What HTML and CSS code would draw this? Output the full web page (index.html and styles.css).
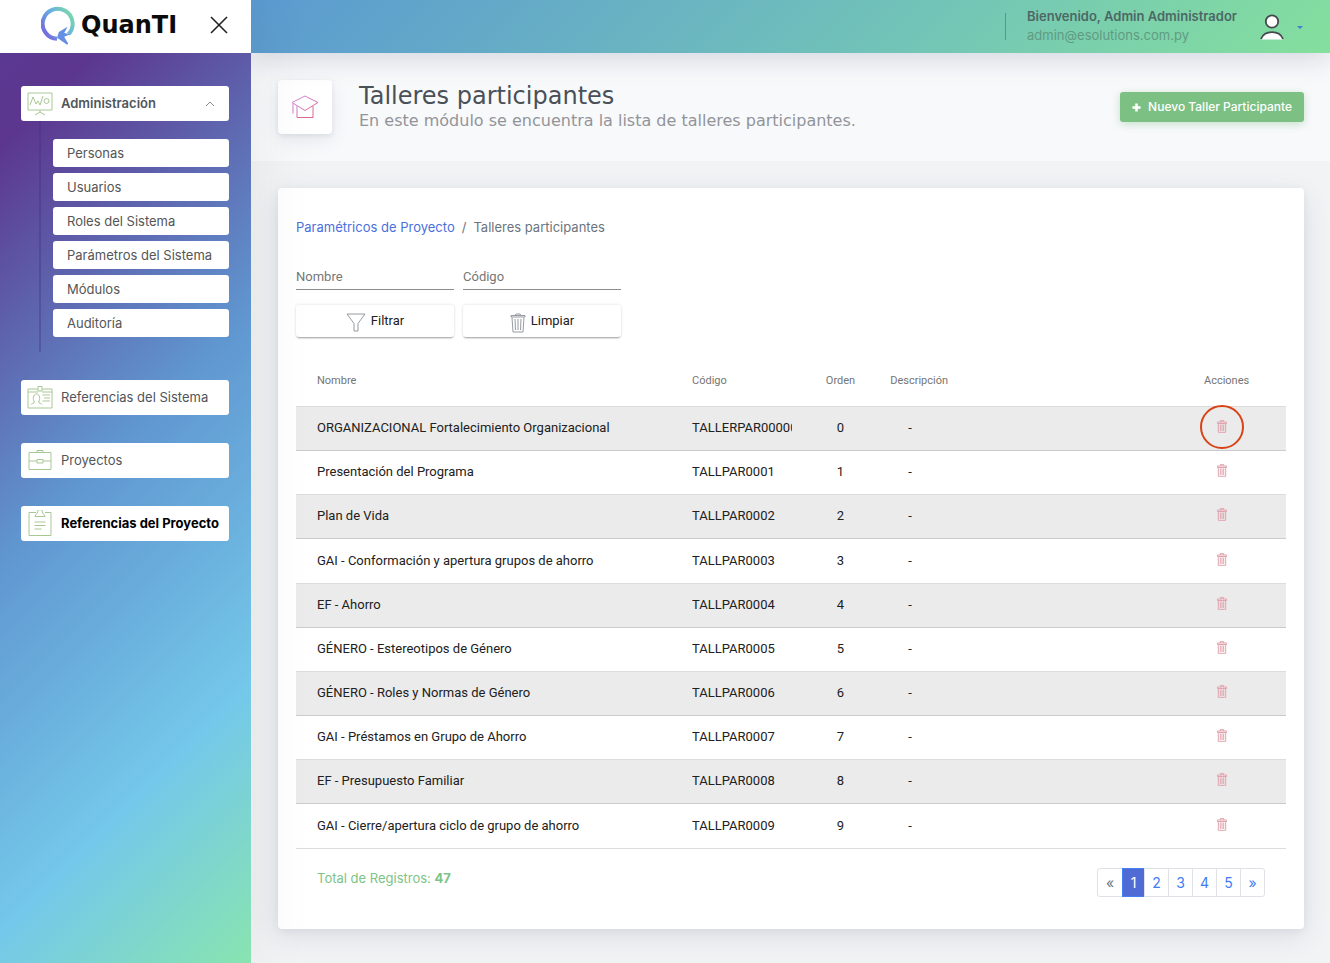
FILE: index.html
```html
<!DOCTYPE html>
<html lang="es">
<head>
<meta charset="utf-8">
<meta name="viewport" content="width=device-width, initial-scale=1">
<title>QuanTI - Talleres participantes</title>
<link rel="stylesheet" href="styles.css">
</head>
<body>
<svg class="defs" aria-hidden="true">
  <defs>
    <linearGradient id="logo-grad" x1="0" y1="0.8" x2="1" y2="0.1">
      <stop offset="0" stop-color="#7667dc"/><stop offset="0.5" stop-color="#66aee3"/><stop offset="1" stop-color="#7ddca6"/>
    </linearGradient>
    <linearGradient id="cap-grad" x1="0" y1="0" x2="1" y2="1">
      <stop offset="0" stop-color="#cf8bea"/><stop offset="1" stop-color="#dc5f78"/>
    </linearGradient>
    <symbol id="trash" viewBox="0 0 10 13">
      <path d="M0.5 3.5V2h9v1.5zM3.3 2V0.6h3.4V2M1.3 3.5V12.3h7.4V3.5M3.3 4.5v6.5M5 4.5v6.5M6.700 4.500v6.500"/>
    </symbol>
  </defs>
</svg>
<div class="app">
  <aside class="sidebar">
    <div class="brand">
      <svg class="brand-mark" viewBox="0 0 36 42" aria-hidden="true">
        <path d="M16 34.800A15 15 0 1 1 27.500 30.200" fill="none" stroke="url(#logo-grad)" stroke-width="4"/>
        <path d="M24.500 25l-6 3.500-1.500 5 9.500 6.500-4.500-7.500 4.500-2-4.500-1z" fill="#648fe2" stroke="#648fe2" stroke-width="1.600"/>
      </svg>
      <span class="brand-name">QuanTI</span>
      <button class="close" type="button" aria-label="Cerrar menú">
        <svg viewBox="0 0 18 18"><path d="M1 1l16 16M17 1L1 17"/></svg>
      </button>
    </div>
    <nav class="menu">
      <div class="group">
        <button class="item item-open" type="button">
          <svg class="item-icon" viewBox="0 0 26 26"><path d="M1 3h24v17H1zM13 20v2M8 25l5-3 5 3M3 15l3-8 3 7 2-3 2 4 3-9"/><circle cx="19.500" cy="11" r="2.500"/></svg>
          <span>Administración</span>
          <svg class="chevron" viewBox="0 0 10 6"><path d="M1 5l4-4 4 4"/></svg>
        </button>
        <div class="submenu">
          <a class="sub" href="#">Personas</a>
          <a class="sub" href="#">Usuarios</a>
          <a class="sub" href="#">Roles del Sistema</a>
          <a class="sub" href="#">Parámetros del Sistema</a>
          <a class="sub" href="#">Módulos</a>
          <a class="sub" href="#">Auditoría</a>
        </div>
      </div>
      <a class="item" href="#">
        <svg class="item-icon" viewBox="0 0 26 26"><path d="M11 5H1v19h24V5H15M1 8h10M15 8h10M11 2.500h4V7h-4zM15.500 11h7.500M17 14h6M15.500 17h7.500M4 20.500c0-1 3.500-1 3.500-2.500-2-2.500-1.500-8 2-8s4 5.500 2 8c0 1.500 3.500 1.500 3.500 2.500"/></svg>
        <span>Referencias del Sistema</span>
      </a>
      <a class="item" href="#">
        <svg class="item-icon" viewBox="0 0 26 26"><path d="M2 5.500h22v17H2zM10 5.500V3.500h6v2M2 14h8M16 14h8M10 12.500h6v3.500h-6z"/></svg>
        <span>Proyectos</span>
      </a>
      <a class="item item-active" href="#">
        <svg class="item-icon" viewBox="0 0 26 26"><path d="M9 2.500H2v23h22v-23h-6M8 6.500h10c0-3-2.500-1.500-2.500-4.500a2 2 0 0 0-5 0c0 3-2.500 1.500-2.500 4.500zM7.500 12h11M7.500 15.500h11M7.500 19h7"/></svg>
        <span>Referencias del Proyecto</span>
      </a>
    </nav>
  </aside>

  <div class="page">
    <header class="topbar">
      <div class="user">
        <strong class="user-name">Bienvenido, Admin Administrador</strong>
        <span class="user-mail">admin@esolutions.com.py</span>
      </div>
      <button class="account" type="button" aria-label="Cuenta">
        <svg class="avatar" viewBox="0 0 24 26"><circle cx="12" cy="7.500" r="6.200"/><path class="avatar-fill" d="M1 25.500C3 20 7 18.200 12 18.200s9 1.800 11 7.300z"/><path d="M1 25C3 20 7 18.200 12 18.200s9 1.800 11 6.800"/></svg>
        <span class="caret"></span>
      </button>
    </header>

    <section class="title-bar">
      <div class="title-icon">
        <svg viewBox="0 0 28 24"><path d="M14 1L27 7.500 14 15.500 1 7.500zM6 11V22.500H22V11M2 8.500v10" fill="none" stroke="url(#cap-grad)"/></svg>
      </div>
      <div class="title-text">
        <h1>Talleres participantes</h1>
        <p>En este módulo se encuentra la lista de talleres participantes.</p>
      </div>
      <button class="new" type="button">
        <svg viewBox="0 0 10 10" aria-hidden="true"><path d="M5 0.500v9M0.500 5h9"/></svg>
        <span>Nuevo Taller Participante</span>
      </button>
    </section>

    <main class="content">
      <div class="card">
        <nav class="crumbs"><a href="#">Paramétricos de Proyecto</a><span>/</span><span>Talleres participantes</span></nav>
        <form class="filters">
          <input type="text" placeholder="Nombre" aria-label="Nombre">
          <input type="text" placeholder="Código" aria-label="Código">
          <button type="button"><svg class="funnel" viewBox="0 0 20 19"><path d="M1 1h18l-7 9.500V18H8v-7.500z"/></svg><span>Filtrar</span></button>
          <button type="button"><svg class="bin" viewBox="0 0 16 20"><path d="M1 4V2.500h14V4zM5 2.500L6 1h4l1 1.500M2 4.500L3 19h10l1-14.500M5 6l.5 11M8 6v11M11 6l-.5 11"/></svg><span>Limpiar</span></button>
        </form>
        <table class="grid">
          <colgroup><col class="c-name"><col class="c-code"><col class="c-order"><col><col class="c-act"></colgroup>
          <thead><tr><th>Nombre</th><th>Código</th><th class="mid">Orden</th><th class="desc">Descripción</th><th class="mid">Acciones</th></tr></thead>
          <tbody>
            <tr><td>ORGANIZACIONAL Fortalecimiento Organizacional</td><td><div class="code">TALLERPAR00000</div></td><td class="mid">0</td><td class="desc">-</td><td class="act"><button class="del marked" type="button" aria-label="Eliminar"><svg><use href="#trash"/></svg></button></td></tr>
            <tr><td>Presentación del Programa</td><td><div class="code">TALLPAR0001</div></td><td class="mid">1</td><td class="desc">-</td><td class="act"><button class="del" type="button" aria-label="Eliminar"><svg><use href="#trash"/></svg></button></td></tr>
            <tr><td>Plan de Vida</td><td><div class="code">TALLPAR0002</div></td><td class="mid">2</td><td class="desc">-</td><td class="act"><button class="del" type="button" aria-label="Eliminar"><svg><use href="#trash"/></svg></button></td></tr>
            <tr><td>GAI - Conformación y apertura grupos de ahorro</td><td><div class="code">TALLPAR0003</div></td><td class="mid">3</td><td class="desc">-</td><td class="act"><button class="del" type="button" aria-label="Eliminar"><svg><use href="#trash"/></svg></button></td></tr>
            <tr><td>EF - Ahorro</td><td><div class="code">TALLPAR0004</div></td><td class="mid">4</td><td class="desc">-</td><td class="act"><button class="del" type="button" aria-label="Eliminar"><svg><use href="#trash"/></svg></button></td></tr>
            <tr><td>GÉNERO - Estereotipos de Género</td><td><div class="code">TALLPAR0005</div></td><td class="mid">5</td><td class="desc">-</td><td class="act"><button class="del" type="button" aria-label="Eliminar"><svg><use href="#trash"/></svg></button></td></tr>
            <tr><td>GÉNERO - Roles y Normas de Género</td><td><div class="code">TALLPAR0006</div></td><td class="mid">6</td><td class="desc">-</td><td class="act"><button class="del" type="button" aria-label="Eliminar"><svg><use href="#trash"/></svg></button></td></tr>
            <tr><td>GAI - Préstamos en Grupo de Ahorro</td><td><div class="code">TALLPAR0007</div></td><td class="mid">7</td><td class="desc">-</td><td class="act"><button class="del" type="button" aria-label="Eliminar"><svg><use href="#trash"/></svg></button></td></tr>
            <tr><td>EF - Presupuesto Familiar</td><td><div class="code">TALLPAR0008</div></td><td class="mid">8</td><td class="desc">-</td><td class="act"><button class="del" type="button" aria-label="Eliminar"><svg><use href="#trash"/></svg></button></td></tr>
            <tr><td>GAI - Cierre/apertura ciclo de grupo de ahorro</td><td><div class="code">TALLPAR0009</div></td><td class="mid">9</td><td class="desc">-</td><td class="act"><button class="del" type="button" aria-label="Eliminar"><svg><use href="#trash"/></svg></button></td></tr>
          </tbody>
        </table>
        <div class="foot">
          <p>Total de Registros: <b>47</b></p>
          <nav class="pager" aria-label="Paginación">
            <a class="off" href="#">«</a><a class="on" href="#">1</a><a href="#">2</a><a href="#">3</a><a href="#">4</a><a href="#">5</a><a href="#">»</a>
          </nav>
        </div>
      </div>
    </main>
  </div>
</div>
</body>
</html>
```
FILE: styles.css
```css
*, *::before, *::after { box-sizing: border-box; }
body { margin: 0; font: 13px/20px Inter, sans-serif; color: #495057; background: #f1f3f5; }
button, input { font: inherit; color: inherit; margin: 0; }
button { border: 0; padding: 0; background: none; cursor: pointer; }
a { text-decoration: none; color: inherit; }
svg { display: block; fill: none; stroke: currentColor; flex: none; }
h1, p { margin: 0; }
.defs { position: absolute; width: 0; height: 0; }

.app { display: flex; min-height: 100vh; }

.sidebar {
  position: relative; z-index: 2; flex: none; width: 251px;
  background: linear-gradient(135deg, #5a3a94 0%, #5c368f 12%, #6096d0 46%, #74c8ea 77%, #88e4b0 100%);
  box-shadow: 7px 0 60px rgba(8, 10, 12, 0.06);
}
.brand { display: flex; align-items: center; height: 53px; padding: 0 23px 3px 41px; background: #fff; }
.brand-mark { width: 36px; height: 42px; }
.brand-name { flex: 1; margin-left: 4px; font: bold 24px/30px "DejaVu Sans", sans-serif; color: #0b0b0b; }
.close { color: #222; }
.close svg { width: 18px; height: 18px; stroke-width: 1.6; }

.menu { display: flex; flex-direction: column; gap: 28px; padding: 33px 22px 40px 21px; }
.item {
  display: flex; align-items: center; width: 100%; height: 35px; padding: 0 14px 2px 6px;
  background: #fff; border-radius: 3px; color: #50555a; white-space: nowrap; text-align: left;
}
.item-icon { width: 26px; height: 26px; margin-right: 8px; color: #a9c795; stroke-width: 1; }
.item-open { font-weight: 600; }
.item-open span { flex: 1; }
.item-active { font-weight: 700; color: #000; padding-right: 0; }
.chevron { width: 10px; height: 6px; margin-top: 3px; color: #888; }
.submenu {
  display: flex; flex-direction: column; gap: 6px;
  margin-left: 18px; padding: 18px 0 15px 12px; border-left: 2px solid rgba(60, 50, 130, 0.35);
}
.sub { height: 28px; padding: 0 14px; line-height: 28px; background: #fff; border-radius: 3px; color: #555; }

.page { flex: 1; min-width: 0; display: flex; flex-direction: column; }
.topbar {
  position: relative; z-index: 1; display: flex; justify-content: flex-end; align-items: center;
  height: 53px; padding: 0 27px 2px 0;
  background: linear-gradient(135deg, #5b9ad1 0%, #72c3b8 60%, #85df9d 100%);
  box-shadow: 0 6px 28px rgba(8, 21, 66, 0.15);
}
.user { display: flex; flex-direction: column; position: relative; padding-left: 22px; line-height: 19px; }
.user::before { content: ""; position: absolute; left: 0; top: 6px; bottom: 5px; width: 1px; background: rgba(52, 90, 90, 0.45); }
.user-name { font-weight: 600; color: #4c6866; }
.user-mail { color: #5f9b83; }
.account { display: flex; align-items: center; gap: 13px; margin-left: 23px; padding-top: 3px; }
.avatar { width: 24px; height: 26px; color: #44484f; fill: #fff; stroke-width: 1.8; }
.avatar-fill { stroke: none; }
.caret { border: 3px solid transparent; border-top-color: #4a7bd6; border-bottom: 0; }

.title-bar { display: flex; align-items: center; min-height: 108px; padding: 0 26px 0 27px; background: #f8f9fb; }
.title-icon {
  display: flex; align-items: center; justify-content: center; width: 54px; height: 54px;
  background: #fff; border-radius: 4px; box-shadow: 0 6px 20px rgba(8, 21, 66, 0.08), 0 2px 5px rgba(8, 21, 66, 0.08);
}
.title-icon svg { width: 28px; height: 24px; }
.title-text { flex: 1; margin-left: 27px; font-family: "DejaVu Sans", sans-serif; }
.title-text h1 { font-size: 24px; font-weight: 400; line-height: 28px; color: #495057; }
.title-text p { font-size: 16px; line-height: 22px; color: #929499; }
.new {
  display: flex; align-items: center; gap: 7px; height: 30px; padding: 0 12px;
  font-size: 12px; font-weight: 500; color: #fff; background: #7dc083; border-radius: 3px;
  box-shadow: 0 2px 8px rgba(80, 170, 90, 0.3);
}
.new svg { width: 9px; height: 9px; stroke-width: 2.8; }

.content { padding: 27px 26px 34px 27px; }
.card {
  padding: 29px 18px 32px; background: #fff; border-radius: 4px;
  box-shadow: 0 8px 30px rgba(8, 21, 66, 0.09), 0 2px 10px rgba(8, 21, 66, 0.06);
}
.crumbs { display: flex; gap: 7px; color: #6c757d; }
.crumbs a { color: #4a6fdc; }
.filters {
  display: grid; grid-template-columns: repeat(2, 158px); gap: 15px 9px; margin-top: 27px;
  font-family: Roboto, sans-serif;
}
.filters input { min-width: 0; width: 100%; height: 26px; padding: 0; border: 0; border-bottom: 1px solid #8c8c8c; background: none; outline: 0; }
.filters input::placeholder { color: #777; opacity: 1; }
.filters button {
  display: flex; align-items: center; justify-content: center; gap: 5px; height: 32px; color: #212121;
  border-radius: 3px; box-shadow: 0 2px 2px -1px rgba(0, 0, 0, 0.35), 0 0 3px rgba(0, 0, 0, 0.14);
}
.filters svg { color: #8b9096; margin-top: 3px; stroke-width: 0.9; }
.funnel { width: 20px; height: 19px; }
.bin { width: 16px; height: 20px; }

.grid { width: 100%; margin-top: 17px; border-collapse: collapse; table-layout: fixed; font-family: Roboto, sans-serif; color: #212121; }
.c-name { width: 40%; }
.c-code, .c-act { width: 12%; }
.c-order { width: 6%; }
.grid th { height: 52px; padding: 2px 0 0; font-size: 11px; font-weight: 400; text-align: left; color: #757575; border-bottom: 1px solid #dcdcdc; }
.grid td { height: 44px; padding: 0; border-bottom: 1px solid #dcdcdc; }
.grid tr > :first-child { padding-left: 21px; }
.grid tbody tr:nth-child(odd) { background: #ebebeb; }
.grid tbody tr:nth-child(odd) td { border-bottom-color: #cbcbcb; }
.grid tbody tr:nth-child(6n + 4) td { height: 45px; }
.grid .mid { text-align: center; }
.grid .desc { padding-left: 20px; }
.grid td.desc { padding-left: 38px; }
.grid td.act { padding: 0 9px 3px 0; }
.code { width: 100px; overflow: hidden; white-space: nowrap; }
.del { position: relative; display: block; margin: 0 auto; color: #e0a3ad; }
.del svg { width: 10px; height: 13px; }
.marked::after {
  content: ""; position: absolute; left: 50%; top: 50%; width: 44px; height: 44px;
  transform: translate(-50%, -50%); border: 2px solid #d84315; border-radius: 50%;
}

.foot { display: flex; justify-content: space-between; align-items: flex-start; padding: 19px 21px 0; }
.foot p { color: #7dc486; }
.pager { display: flex; font-size: 14px; line-height: 27px; text-align: center; }
.pager a { width: 25px; margin-left: -1px; border: 1px solid #dee2e6; color: #3f7cf4; background: #fff; }
.pager a:first-child { width: 26px; margin-left: 0; border-radius: 3px 0 0 3px; }
.pager a:last-child { border-radius: 0 3px 3px 0; }
.pager .off { color: #6c757d; }
.pager .on { width: 23px; color: #fff; background: #506bd3; border-color: #4480f5; }
```
